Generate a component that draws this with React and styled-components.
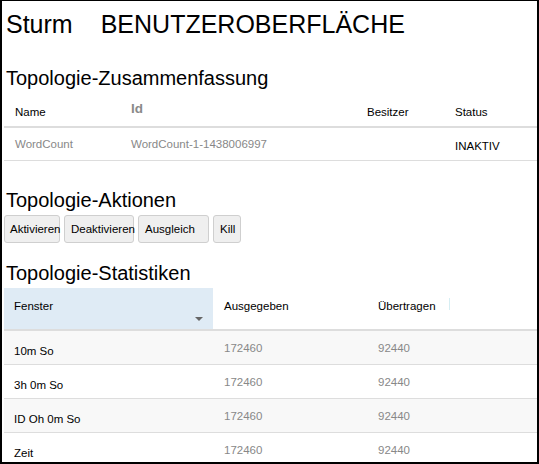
import React from 'react'
import styled, { createGlobalStyle } from 'styled-components'

const Global = createGlobalStyle`
  html, body {
    margin: 0;
    padding: 0;
    background: #fff;
  }
  body {
    font-family: "Liberation Sans", Arial, sans-serif;
    color: #000;
  }
`

const Frame = styled.div`
  box-sizing: border-box;
  width: 539px;
  height: 464px;
  border: 2px solid #000;
  border-top-width: 1px;
  padding: 0 0 0 2px;
  overflow: hidden;
  display: flex;
  flex-direction: column;
`

const Title = styled.h1`
  margin: 8px 0 0 2px;
  font-size: 25px;
  font-weight: normal;
  line-height: 30px;
  display: flex;
  gap: 28px;
  white-space: nowrap;
`

const Heading = styled.h2`
  margin: ${p => p.$top}px 0 0 2px;
  font-size: 20px;
  font-weight: normal;
  line-height: 24px;
  white-space: nowrap;
`

const SummaryRow = styled.div`
  display: grid;
  grid-template-columns: 116px 236px 88px 1fr;
  align-items: center;
  flex: 0 0 auto;
  height: ${p => p.$height}px;
  padding-top: ${p => p.$padTop || 0}px;
  box-sizing: border-box;
  border-bottom: ${p => p.$thick ? 2 : 1}px solid #ddd;
`

const Cell = styled.div`
  padding-left: 11px;
  font-size: 11.5px;
  line-height: 14px;
  color: ${p => p.$muted ? '#888' : '#000'};
  white-space: nowrap;
  margin-top: ${p => p.$shift || 0}px;
`

const IdHead = styled.div`
  padding-left: 11px;
  font-size: 13.5px;
  font-weight: bold;
  line-height: 16px;
  color: #8a8a8a;
  margin-bottom: 6px;
`

const Actions = styled.div`
  display: flex;
  flex: 0 0 auto;
  gap: 4px;
  margin-top: 3px;
`

const Button = styled.button`
  box-sizing: border-box;
  width: ${p => p.$w}px;
  height: 28px;
  padding: 0 0 0 ${p => p.$pad}px;
  background: #efefef;
  border: 1px solid #cfcfcf;
  border-radius: 3px;
  font-family: "Liberation Sans", Arial, sans-serif;
  font-size: 11.5px;
  color: #000;
  text-align: left;
  white-space: nowrap;
  overflow: visible;
`

const StatsHead = styled.div`
  display: grid;
  grid-template-columns: 209px 154px 82px 1fr;
  flex: 0 0 auto;
  height: 43px;
  margin-top: 3px;
  box-sizing: border-box;
  border-bottom: 2px solid #ddd;
`

const HeadCell = styled.div`
  display: flex;
  flex-direction: column;
  justify-content: space-between;
  padding: ${p => p.$sorted ? '11px 10px 8px 10px' : '11px 0 0 11px'};
  background: ${p => p.$sorted ? '#dfebf5' : 'transparent'};
  font-size: 11.5px;
  line-height: 14px;
  white-space: nowrap;
`

const SortArrow = styled.div`
  align-self: flex-end;
  width: 0;
  height: 0;
  border-left: 4px solid transparent;
  border-right: 4px solid transparent;
  border-top: 4px solid #666;
`

const Divider = styled.div`
  width: 1px;
  height: 12px;
  background: #d6eef3;
  margin: -1px 0 0 -11px;
`

const StatsRow = styled.div`
  display: grid;
  grid-template-columns: 209px 154px 82px 1fr;
  align-items: center;
  flex: 0 0 auto;
  height: 34px;
  box-sizing: border-box;
  background: ${p => p.$striped ? '#f8f8f8' : '#fff'};
  border-bottom: 1px solid #ddd;
`

const Label = styled.div`
  padding-left: 10px;
  font-size: 11.5px;
  line-height: 14px;
  margin-top: 6px;
  white-space: nowrap;
`

const Num = styled.div`
  padding-left: 11px;
  font-size: 11.5px;
  line-height: 14px;
  color: #888;
`

const buttons = [
  { label: 'Aktivieren', w: 56, pad: 5 },
  { label: 'Deaktivieren', w: 70, pad: 6 },
  { label: 'Ausgleich', w: 71, pad: 6 },
  { label: 'Kill', w: 28, pad: 6 },
]

const stats = [
  { window: '10m So', emitted: '172460', transferred: '92440' },
  { window: '3h 0m So', emitted: '172460', transferred: '92440' },
  { window: 'ID Oh 0m So', emitted: '172460', transferred: '92440' },
  { window: 'Zeit', emitted: '172460', transferred: '92440' },
]

export default function App() {
  return (
    <>
      <Global />
      <Frame>
        <Title>
          <span>Sturm</span>
          <span>BENUTZEROBERFLÄCHE</span>
        </Title>

        <Heading $top={27}>Topologie-Zusammenfassung</Heading>
        <SummaryRow $height={34} $padTop={4} $thick style={{ marginTop: 4 }}>
          <Cell>Name</Cell>
          <IdHead>Id</IdHead>
          <Cell>Besitzer</Cell>
          <Cell>Status</Cell>
        </SummaryRow>
        <SummaryRow $height={33}>
          <Cell $muted>WordCount</Cell>
          <Cell $muted>WordCount-1-1438006997</Cell>
          <Cell />
          <Cell $shift={3}>INAKTIV</Cell>
        </SummaryRow>

        <Heading $top={27}>Topologie-Aktionen</Heading>
        <Actions>
          {buttons.map(b => (
            <Button key={b.label} $w={b.w} $pad={b.pad}>{b.label}</Button>
          ))}
        </Actions>

        <Heading $top={18}>Topologie-Statistiken</Heading>
        <StatsHead>
          <HeadCell $sorted>
            <span>Fenster</span>
            <SortArrow />
          </HeadCell>
          <HeadCell>Ausgegeben</HeadCell>
          <HeadCell>Übertragen</HeadCell>
          <HeadCell><Divider /></HeadCell>
        </StatsHead>
        {stats.map((r, i) => (
          <StatsRow key={r.window} $striped={i % 2 === 0}>
            <Label>{r.window}</Label>
            <Num>{r.emitted}</Num>
            <Num>{r.transferred}</Num>
            <div />
          </StatsRow>
        ))}
      </Frame>
    </>
  )
}
